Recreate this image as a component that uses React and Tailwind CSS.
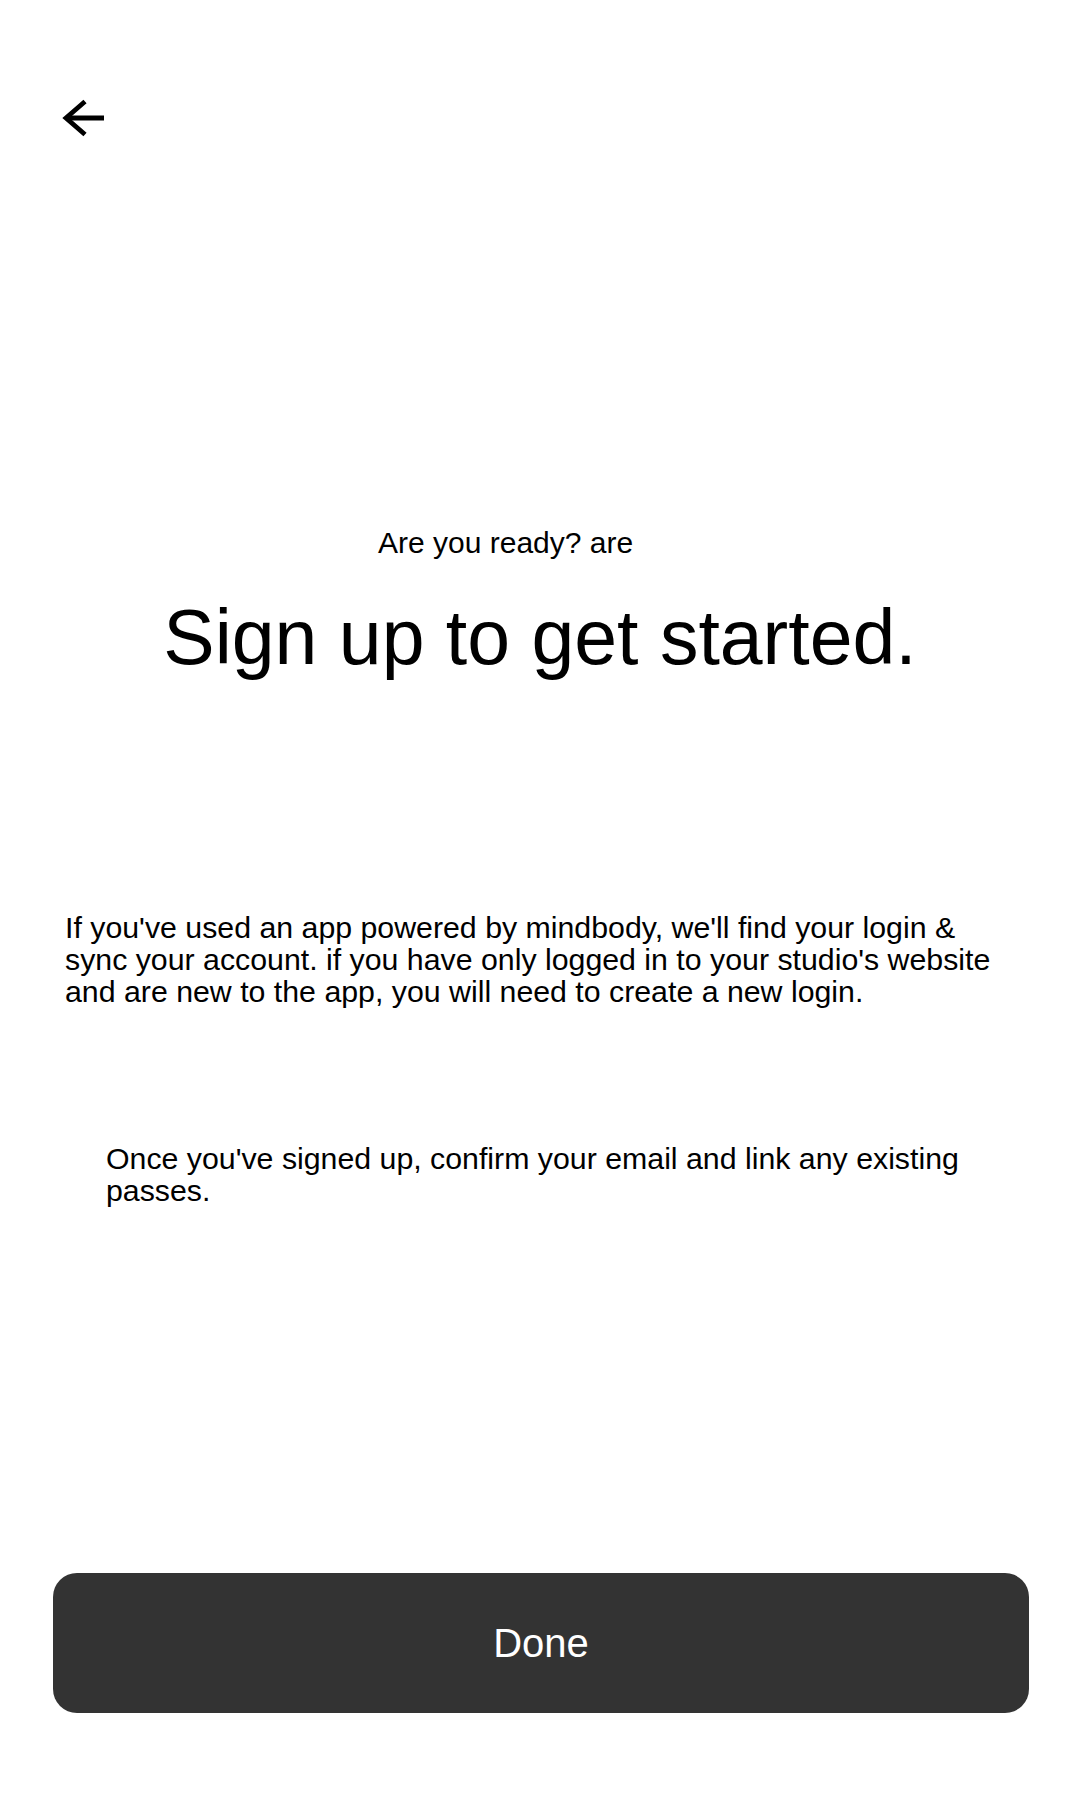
const BackArrow = () => (
  <svg width="48" height="40" viewBox="0 0 48 40" fill="none" stroke="#000" strokeWidth="4.8">
    <path d="M25 3.5 L6 20 L25 36.5" strokeLinejoin="miter" />
    <path d="M6 20 H44" />
  </svg>
);

const App = () => {
  return (
    <div
      className="min-h-[1800px] w-full bg-white flex flex-col text-black"
      style={{ fontFamily: '"Liberation Sans", Arial, sans-serif' }}
    >
      {/* Header */}
      <div className="pt-[98px] pl-[60px] h-[137px]">
        <button className="block">
          <BackArrow />
        </button>
      </div>

      <p className="mt-[389px] pl-[378px] text-[30px] leading-[33px]">Are you ready? are</p>

      <h1 className="mt-[35px] text-center text-[77px] leading-[87px]">Sign up to get started.</h1>

      <p className="mt-[231px] pl-[65px] pr-[60px] text-[30.3px] leading-[32px]">
        If you've used an app powered by mindbody, we'll find your login &amp; sync your account. if you have only logged in to your studio's website and are new to the app, you will need to create a new login.
      </p>

      <p className="mt-[135px] pl-[106px] pr-[106px] text-[30.3px] leading-[32px]">
        Once you've signed up, confirm your email and link any existing passes.
      </p>

      <div className="mt-[366px] pl-[53px] pr-[51px] pb-[88px]">
        <button className="w-full h-[140px] rounded-[24px] bg-[#333333] text-white text-[40px] flex items-center justify-center">
          Done
        </button>
      </div>
    </div>
  );
};

export default App;
